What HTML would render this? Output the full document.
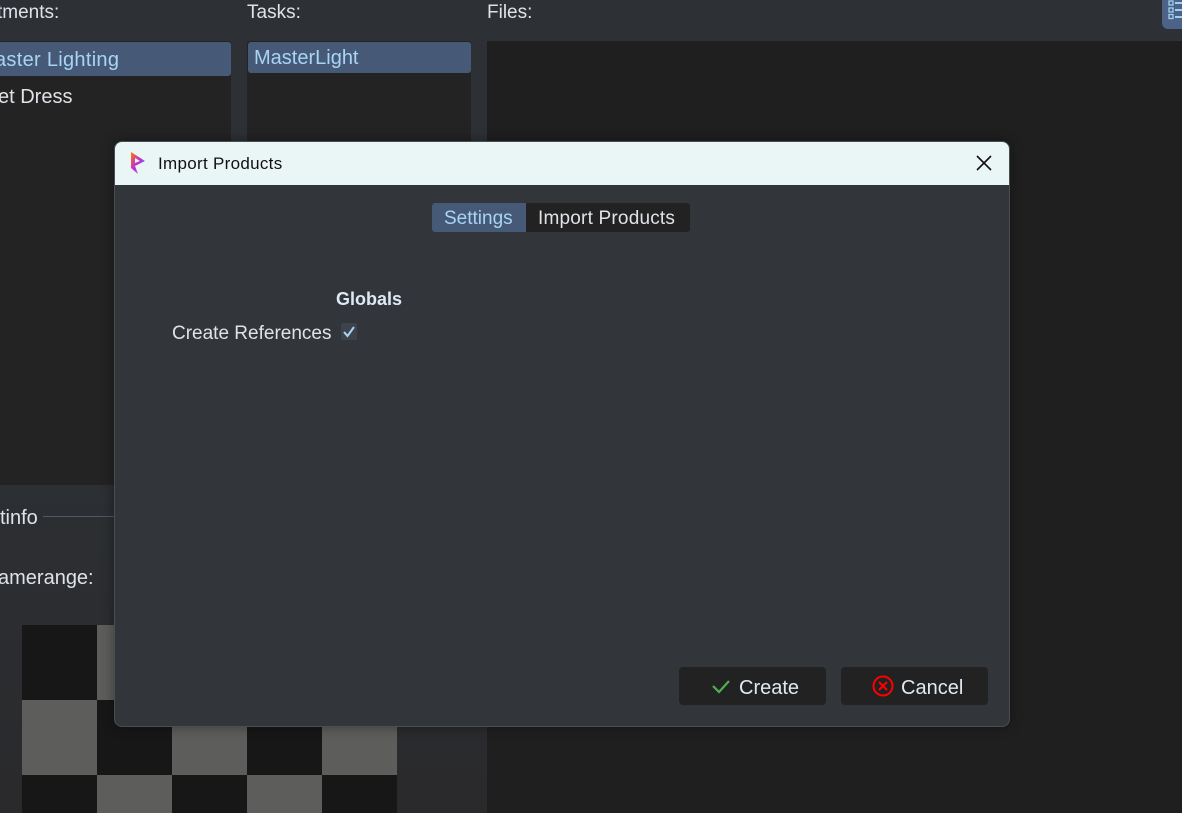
<!DOCTYPE html>
<html><head><style>
*{margin:0;padding:0;box-sizing:border-box}
body{width:1182px;height:813px;overflow:hidden;background:#2d3035;font-family:"Liberation Sans",sans-serif;position:relative;color:#dfe3e8}
.abs{position:absolute}
.lbl{font-size:19px;color:#dfe3e8}
.list{background:#232323;border-radius:3px}
.sel{background:#465a78;color:#a9d4f5;font-size:20px;border-radius:3px}
</style></head><body>
<div class="abs lbl" style="left:-3px;top:2px">tments:</div>
<div class="abs lbl" style="left:247px;top:2px">Tasks:</div>
<div class="abs lbl" style="left:487px;top:2px">Files:</div>
<div class="abs" style="left:1162px;top:0;width:24px;height:29px;background:#4c6288;border-radius:0 0 0 6px"></div>
<svg class="abs" style="left:1168px;top:0" width="14" height="20"><g fill="none" stroke="#9fd0f0" stroke-width="1.3"><rect x="1" y="1" width="4" height="4"/><rect x="1" y="8" width="4" height="4"/><rect x="1" y="14.5" width="4" height="4"/></g><g fill="#9fd0f0"><rect x="7" y="2" width="7" height="2"/><rect x="7" y="9" width="7" height="2"/><rect x="7" y="16" width="7" height="2"/></g></svg>

<div class="abs list" style="left:-5px;top:41px;width:236px;height:444px"></div>
<div class="abs sel" style="left:-5px;top:42px;width:236px;height:34px;padding:7px 0 0 0;letter-spacing:0.3px">aster Lighting</div>
<div class="abs" style="left:-2px;top:86px;font-size:20px">et Dress</div>
<div class="abs list" style="left:247px;top:41px;width:224px;height:444px"></div>
<div class="abs sel" style="left:248px;top:42px;width:223px;height:31px;padding:5px 0 0 6px">MasterLight</div>
<div class="abs" style="left:487px;top:41px;width:695px;height:772px;background:#1f1f1f"></div>

<div class="abs" style="left:0;top:485px;width:487px;height:328px;background:linear-gradient(#2c2f33,#2a2a2c)"></div>
<div class="abs" style="left:0;top:507px;font-size:20px">tinfo</div>
<div class="abs" style="left:43px;top:516px;width:80px;height:1px;background:#4a5a70"></div>
<div class="abs" style="left:-2px;top:567px;font-size:20px">amerange:</div>
<div class="abs" style="left:22px;top:625px;width:375px;height:188px;background:
conic-gradient(#5d5e5b 25%,#171717 0 50%,#5d5e5b 0 75%,#171717 0) 0 0/150px 150px"></div>

<div class="abs" style="left:114px;top:141px;width:896px;height:586px;border-radius:8px;background:#32353a;border:1px solid #4a4d52;overflow:hidden;box-shadow:0 0 12px rgba(0,0,0,.4)">
 <div style="height:43px;background:#e9f6f5;position:relative">
  <svg class="abs" style="left:14px;top:9px" width="18" height="25" viewBox="0 0 18 25"><defs><linearGradient id="g" x1="0" y1="0" x2="1" y2="1"><stop offset="0" stop-color="#ff7a00"/><stop offset=".5" stop-color="#c02ad8"/><stop offset="1" stop-color="#2ab8e8"/></linearGradient></defs><path d="M2 1 L16 10 L6 15 L9 23 L2 17 Z" fill="url(#g)"/><path d="M6 7 L11 10 L6 12Z" fill="#e9f6f5"/></svg>
  <div class="abs" style="left:43px;top:12px;font-size:17px;color:#111;letter-spacing:0.3px">Import Products</div>
  <svg class="abs" style="left:860px;top:12px" width="18" height="18"><path d="M2 2L16 16M16 2L2 16" stroke="#111" stroke-width="1.6"/></svg>
 </div>
 <div class="abs" style="left:317px;top:61px;width:258px;height:29px;background:#222;border-radius:3px"></div>
 <div class="abs" style="left:317px;top:61px;width:94px;height:29px;background:#465a78;border-radius:3px 0 0 3px;color:#a9d4f5;font-size:19px;padding:5px 0 0 12px">Settings</div>
 <div class="abs" style="left:423px;top:66px;font-size:19px;letter-spacing:0.2px">Import Products</div>
 <div class="abs" style="left:221px;top:147px;font-size:18px;font-weight:bold;color:#dfe9f3">Globals</div>
 <div class="abs" style="left:57px;top:181px;font-size:19px">Create References</div>
 <div class="abs" style="left:226px;top:181px;width:16px;height:17px;background:#3d434b;border-radius:2px"></div>
 <svg class="abs" style="left:226px;top:181px" width="16" height="17"><path d="M3 9L6.5 13L13 4" fill="none" stroke="#a9d4f5" stroke-width="2"/></svg>
 <div class="abs" style="left:564px;top:525px;width:147px;height:38px;background:#222;border-radius:4px"></div>
 <svg class="abs" style="left:596px;top:536px" width="20" height="16"><path d="M2 8L8 14L18 3" fill="none" stroke="#4caf50" stroke-width="2.2"/></svg>
 <div class="abs" style="left:624px;top:535px;font-size:20px;color:#dfe9f3">Create</div>
 <div class="abs" style="left:726px;top:525px;width:147px;height:38px;background:#222;border-radius:4px"></div>
 <svg class="abs" style="left:757px;top:533px" width="22" height="22"><circle cx="11" cy="11" r="9.5" fill="none" stroke="#f00" stroke-width="2"/><path d="M7 7L15 15M15 7L7 15" stroke="#f00" stroke-width="2"/></svg>
 <div class="abs" style="left:786px;top:535px;font-size:20px;color:#dfe9f3">Cancel</div>
</div>
</body></html>
